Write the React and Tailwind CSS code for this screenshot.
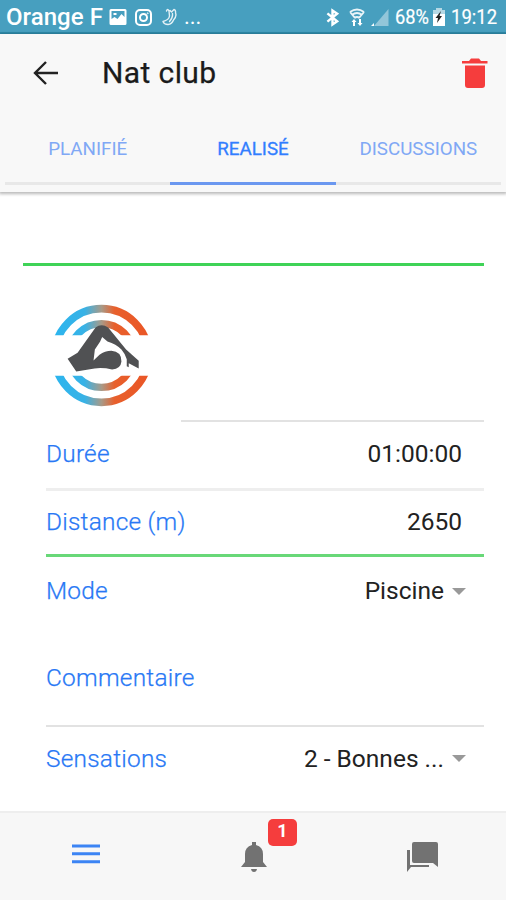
import React, { useState } from "react";

const TABS = ["PLANIFIÉ", "REALISÉ", "DISCUSSIONS"];

function StatusBar() {
  return (
    <div className="h-[34px] shrink-0 bg-[#479fbf] border-b-2 border-[#2f8bab] flex items-center text-white">
      <div className="pl-[6px] w-[109px] text-[24px] leading-[34px] pt-[2px] font-medium whitespace-nowrap tracking-[0.05px]">Orange F</div>
      <svg className="mt-[2px]" width="18" height="16" viewBox="0 0 17 16">
        <path fillRule="evenodd" fill="#fff" d="M1.500 0h14Q17 0 17 1.500v13q0 1.500-1.500 1.500h-14Q0 16 0 14.500v-13Q0 0 1.500 0ZM2 2v8l3-2 3 2 4-5 3 3V2ZM4 4h3v2H4Z" />
      </svg>
      <svg className="ml-[8px] mt-[3px]" width="17" height="17" viewBox="0 0 17 17" fill="none" stroke="#fff" strokeWidth="2">
        <rect x="1" y="1" width="15" height="15" rx="4" />
        <circle cx="8.500" cy="8.500" r="3.500" />
        <circle cx="12.700" cy="4.300" r=".5" strokeWidth="1" />
      </svg>
      <svg className="ml-[10px] mt-[2px]" width="15" height="18" viewBox="0 0 15 18" fill="none" stroke="#e4f1f6" strokeWidth="1.400" strokeLinejoin="round" strokeLinecap="round">
        <path d="M4.500 3Q5.500 0 7 3l.5 5Q7 12 1 13.500q1 3 5 3 4-.5 5.500-4.500Q15 8 13.500 5 14 2 12 1.500L9.500 4 8 2.500" />
        <path d="M10.500 5.500q.5 4-3 8" />
      </svg>
      <span className="ml-[7px] text-[22px] leading-[34px] pt-[1px]">...</span>

      <div className="ml-auto flex items-center pr-[10px] pt-[2px]">
        <svg width="13" height="19" viewBox="0 0 14 19" fill="none" stroke="#fff" strokeWidth="2.600">
          <path d="M1.500 5 12 13.500 7 17v-15L12 5.500 1.500 14" />
        </svg>
        <svg className="ml-[10px]" width="16" height="19" viewBox="0 0 16 19" fill="none" stroke="#e9f4f8" strokeWidth="1.800">
          <path d="M1 4Q8-1 15 4M3 7q5-4 10 0M5.500 10q2.500-2 5 0M1 4l5 6M15 4l-5 6" />
          <path fill="#fff" stroke="none" d="M2.500 14 5 11l2.500 3H6v4H4v-4ZM8.500 15H10v-4h2v4h1.500L11 18Z" />
        </svg>
        <svg className="ml-[6px]" width="18" height="18" viewBox="0 0 18 18">
          <path fill="#93c6d9" d="M17.500 1v17H3L17.500 1Z" />
          <path fill="#fff" d="M0 18l3-3v3Z" />
        </svg>
        <span className="ml-[6px] w-[34px] text-[21px] leading-[32px] whitespace-nowrap">
          <span className="inline-block origin-left scale-x-[0.87] [-webkit-text-stroke:0.2px_white]">68%</span>
        </span>
        <svg className="ml-[4px]" width="12" height="18" viewBox="0 0 12 18">
          <path fill="#b5d8e4" d="M3 0h6v2h3v6H0V2h3Z" />
          <path fill="#fff" d="M0 6h12v12H0Z" />
          <path fill="#222" d="M8 3 2.500 10H5l-1 5 5-7H6.500Z" />
        </svg>
        <span className="ml-[6px] w-[45px] text-[21px] leading-[32px] whitespace-nowrap">
          <span className="inline-block origin-left scale-x-[0.88] [-webkit-text-stroke:0.2px_white]">19:12</span>
        </span>
      </div>
    </div>
  );
}

function Header({ tab, onTab }) {
  return (
    <header className="h-[158px] shrink-0 bg-[#f8f8f8] shadow-[0_1px_3px_1px_rgba(0,0,0,0.28)] flex flex-col">
      <div className="h-[77px] pl-[33px] pr-[18px] flex items-center">
        <svg width="26" height="24" viewBox="0 0 26 24" fill="none" stroke="#222" strokeWidth="2.400">
          <path d="M25 12H2M13 1 2 12l11 11" />
        </svg>
        <h1 className="ml-[43px] text-[30px] leading-[36px] text-[#1b1b1b] tracking-[0.4px] [-webkit-text-stroke:0.25px_#1b1b1b]">Nat club</h1>
        <svg className="ml-auto" width="26" height="30" viewBox="0 0 26 30" fill="#f53d3d">
          <path d="M0 3h7l2-2.500h8L19 3h6.500v2.500H0ZM3 7.500h20V27q0 3-3 3H6q-3 0-3-3Z" />
        </svg>
      </div>

      <div className="h-[74px] px-[5px] grid grid-cols-3">
        {TABS.map((t) => (
          <button
            key={t}
            onClick={() => onTab(t)}
            className={`pt-[26px] text-[18.800px] leading-[24px] flex justify-center border-b-[3px] ${
              t === tab
                ? "text-[#327eff] border-[#6b98f0] [-webkit-text-stroke:0.3px_#327eff]"
                : "text-[#80a8f5] border-[#e8e8e8]"
            }`}
          >
            {t}
          </button>
        ))}
      </div>
    </header>
  );
}

function SwimLogo() {
  return (
    <svg width="97" height="105" viewBox="40 36 292 316">
      <defs>
        <linearGradient id="ring" gradientUnits="userSpaceOnUse" x1="46" y1="0" x2="326" y2="0">
          <stop offset="0" stopColor="#2cb5ee" />
          <stop offset=".32" stopColor="#38b2e6" />
          <stop offset=".5" stopColor="#a89a88" />
          <stop offset=".64" stopColor="#e8602c" />
          <stop offset="1" stopColor="#ea5626" />
        </linearGradient>
        <clipPath id="halves">
          <path d="M30 30h310v103H30ZM30 255h310v100H30Z" />
        </clipPath>
      </defs>
      <g clipPath="url(#halves)" fill="none" stroke="url(#ring)">
        <circle cx="186" cy="194" r="141" strokeWidth="23" />
        <circle cx="186" cy="194" r="96" strokeWidth="22" />
      </g>
      <path
        fill="#505153"
        d="M84 204 114 186 168 110Q186 96 206 110L260 176 298 210V233L268 217V229L262 226V205Q258 190 246 176 230 160 204 152L188 138 182 152 166 176 162 209 180 192Q196 180 216 180 246 182 246 212 244 234 218 236 190 230 165 233L110 242Z"
      />
    </svg>
  );
}

function Row({ label, value, select, className }) {
  return (
    <div className={`flex items-center justify-between leading-[30px] ${className}`}>
      <span className="text-[24.400px] font-light text-[#2878f5] tracking-[0.25px] [-webkit-text-stroke:0.25px_#2878f5]">{label}</span>
      <span className={`text-[24.500px] flex items-center text-[#222] ${select ? "pr-[18px]" : "pr-[22px]"}`}>
        {value}
        {select && <span className="ml-[8px] border-x-[7px] border-t-[7px] border-x-transparent border-t-[#999]" />}
      </span>
    </div>
  );
}

function Footer() {
  return (
    <footer className="h-[89px] shrink-0 pl-[2px] bg-[#f7f7f7] border-t-2 border-[#eeeeee] grid grid-cols-3 justify-items-center">
      <svg className="mt-[31px]" width="28" height="20" viewBox="0 0 28 20" fill="#3c84f4">
        <path d="M0 .5h28v3H0ZM0 8.300h28v3H0ZM0 16.200h28v3H0Z" />
      </svg>
      <div className="relative mt-[29px] h-[30px]">
        <svg width="26" height="30" viewBox="0 0 26 30" fill="#727272">
          <path d="M11 0h4v3q7 2 7 9v8l4 5H0l4-5v-8q0-7 7-9ZM10 27h6q-.5 3-3 3t-3-3Z" />
        </svg>
        <span className="absolute left-[27px] top-[-23px] w-[29px] h-[27px] rounded-[5px] bg-[#f53d3d] text-white text-[18px] leading-[24px] font-bold text-center">1</span>
      </div>
      <svg className="mt-[29px]" width="31" height="30" viewBox="0 0 31 30" fill="#727272">
        <path d="M7 0h22q2 0 2 2v23l-5-4H7q-2 0-2-2V2q0-2 2-2ZM0 8h3v15h19v2H4l-4 5Z" />
      </svg>
    </footer>
  );
}

export default function App() {
  const [tab, setTab] = useState("REALISÉ");

  return (
    <div className="w-[506px] h-[900px] bg-white flex flex-col overflow-hidden font-['Roboto',sans-serif]">
      <StatusBar />
      <Header tab={tab} onTab={setTab} />

      <main className="flex-1 pl-[23px] pr-[22px] flex flex-col">
        <div className="h-[74px] border-b-[3px] border-[#3fd357]" />
        <div className="h-[156px] flex">
          <div className="w-[158px] pl-[30px] pt-[37px]">
            <SwimLogo />
          </div>
          <div className="flex-1 border-b-2 border-[#e2e2e2]" />
        </div>

        <div className="pl-[23px] flex flex-col">
          <Row label="Durée" value="01:00:00" className="h-[69px] pb-[3px] border-b-[3px] border-[#eeeeee]" />
          <Row label="Distance (m)" value="2650" className="h-[66px] pb-[1px] border-b-[3px] border-[#68d878]" />
          <Row label="Mode" value="Piscine" select className="h-[69px] pb-[1px]" />
          <Row label="Commentaire" className="h-[101px] pt-[4px] border-b-2 border-[#e2e2e2]" />
          <Row label="Sensations" value="2 - Bonnes ..." select className="h-[65px] pb-[2px]" />
        </div>
      </main>

      <Footer />
    </div>
  );
}
